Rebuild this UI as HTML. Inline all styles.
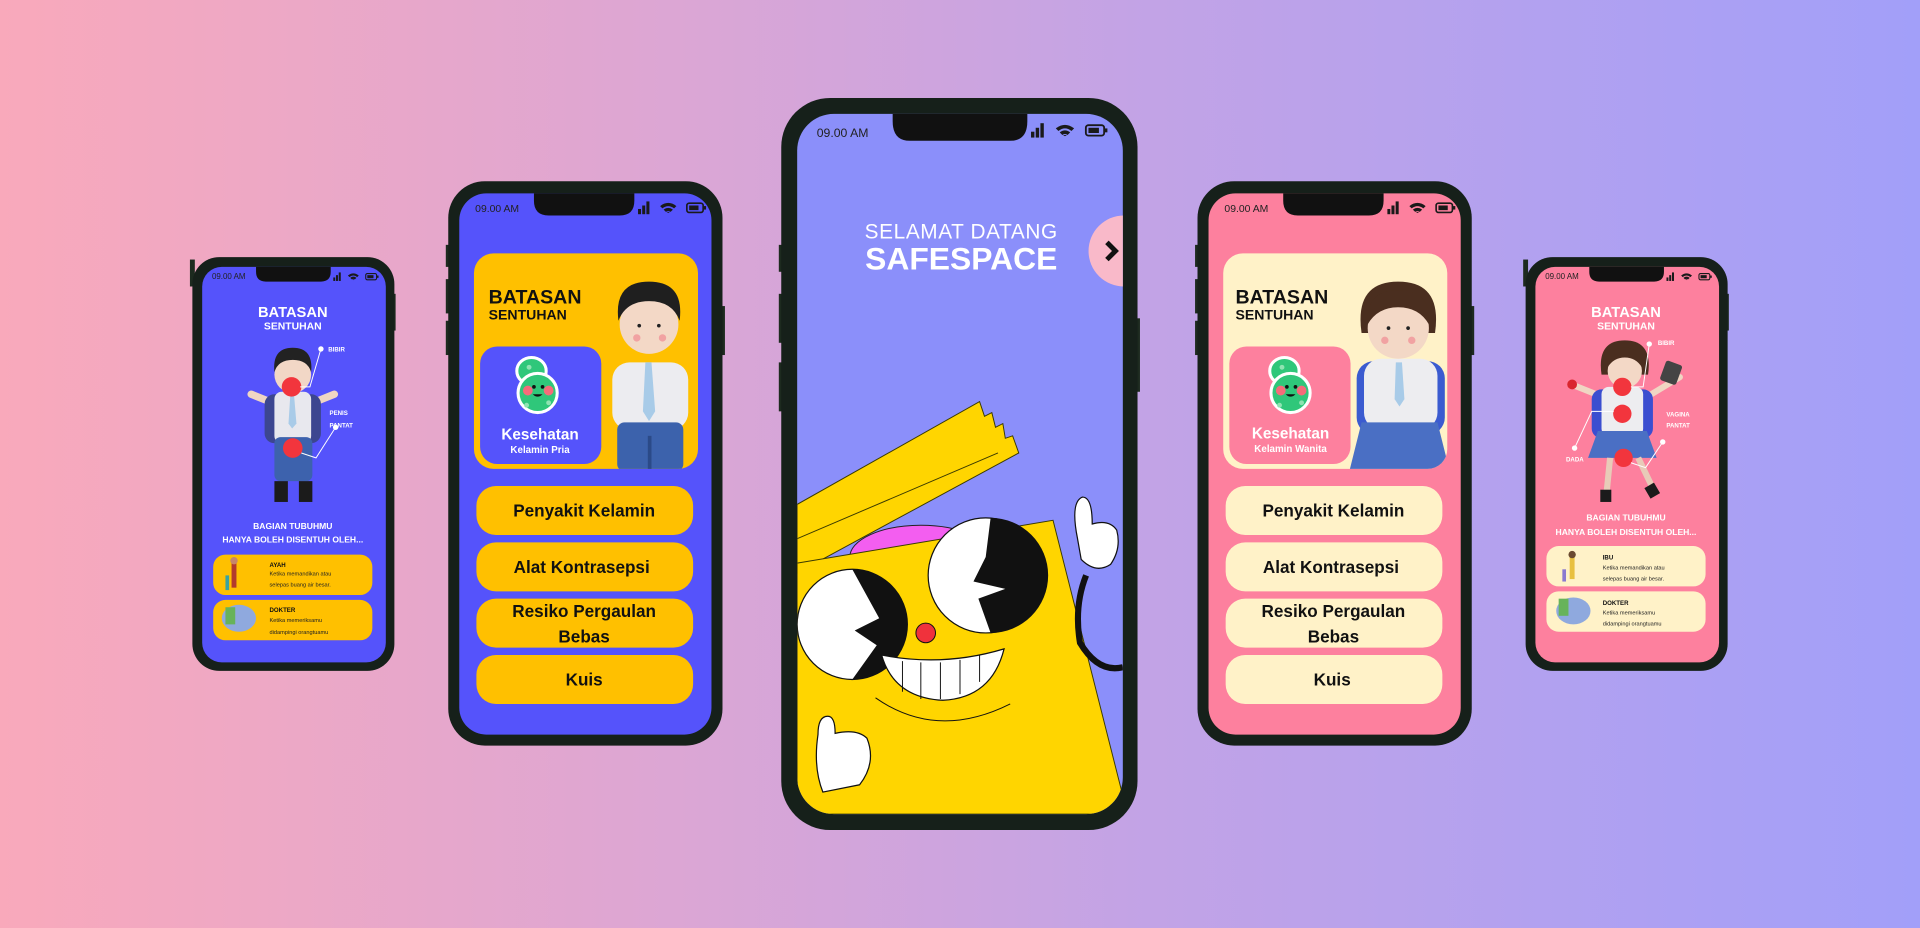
<!DOCTYPE html>
<html><head><meta charset="utf-8"><style>
html,body{margin:0;padding:0;width:1920px;height:928px;overflow:hidden}
body{background:linear-gradient(90deg,#f9a9bb 0%,#dca6d4 35%,#c2a3e6 60%,#a29ff9 100%)}
svg{position:absolute;left:0;top:0}
text{font-family:"Liberation Sans",sans-serif}
</style></head><body>
<svg width="1920" height="928" viewBox="0 0 1568 758" xmlns="http://www.w3.org/2000/svg">
<defs>
<symbol id="st" viewBox="0 0 60 12">
<rect x="0" y="7" width="2.6" height="4.5" fill="#1a1a1a"/><rect x="3.6" y="4" width="2.6" height="7.5" fill="#1a1a1a"/><rect x="7.2" y="0.5" width="2.6" height="11" fill="#1a1a1a"/>
<path d="M19 4.5 Q26 -1 33 4.5 L31 6.5 Q26 2.5 21 6.5Z M22 7.5 Q26 4.5 30 7.5 L28 9.5 Q26 8 24 9.5Z M26 10.5 l-1.5 -1 h3z" fill="#1a1a1a"/>
<rect x="42" y="2" width="14" height="8" rx="2" fill="none" stroke="#1a1a1a" stroke-width="1.4"/><rect x="44" y="4" width="8" height="4" fill="#1a1a1a"/><rect x="56.5" y="4.5" width="2" height="3" fill="#1a1a1a"/>
</symbol>
<symbol id="germ" viewBox="0 0 40 50">
<ellipse cx="16" cy="14" rx="12" ry="11" fill="#2fc77a" stroke="#fff" stroke-width="2.5"/>
<ellipse cx="21" cy="32" rx="16" ry="16" fill="#2fc77a" stroke="#fff" stroke-width="2.5"/>
<circle cx="13" cy="30" r="4" fill="#f56b7a"/><circle cx="30" cy="30" r="4" fill="#f56b7a"/>
<circle cx="18" cy="27" r="1.5" fill="#111"/><circle cx="25" cy="27" r="1.5" fill="#111"/>
<path d="M17 33 q4 4 8 0z" fill="#111"/>
<circle cx="12" cy="42" r="2" fill="#8fe3b2"/><circle cx="30" cy="40" r="2" fill="#8fe3b2"/><circle cx="14" cy="11" r="2" fill="#8fe3b2"/>
</symbol>
<clipPath id="cs"><rect x="651" y="93" width="266" height="572" rx="30"/></clipPath>
<clipPath id="c1"><rect x="387" y="207" width="183" height="176" rx="16"/></clipPath>
<clipPath id="c2"><rect x="999" y="207" width="183" height="176" rx="16"/></clipPath>
</defs>

<!-- ===== Small left phone ===== -->
<rect x="155" y="212" width="4" height="22" fill="#1d2a1f"/><rect x="320" y="240" width="3" height="30" fill="#1d2a1f"/>
<rect x="157" y="210" width="165" height="338" rx="22" fill="#16201a"/>
<rect x="165" y="218" width="150" height="323" rx="16" fill="#5553fb"/>
<path d="M209 218 h61 v4 q0 8 -8 8 h-45 q-8 0 -8 -8z" fill="#111"/>
<text x="173" y="228" font-size="6.5" fill="#222">09.00 AM</text>
<use href="#st" x="272" y="222" width="38" height="8"/>
<text x="239" y="259" font-size="12" font-weight="bold" fill="#fff" text-anchor="middle">BATASAN</text>
<text x="239" y="269" font-size="8.5" font-weight="bold" fill="#fff" text-anchor="middle">SENTUHAN</text>
<path d="M205 322 l20 8 M273 322 l-20 8" stroke="#f0d6c3" stroke-width="6" stroke-linecap="round"/>
<rect x="216" y="322" width="46" height="40" rx="8" fill="#3c4690"/>
<rect x="224" y="320" width="30" height="42" rx="6" fill="#e8e8ee"/>
<path d="M237 322 l3 0 l2 24 l-3.5 4 l-3 -4z" fill="#a9cbe8"/>
<rect x="224" y="357" width="31" height="36" rx="5" fill="#3d62ad"/>
<rect x="224" y="393" width="11" height="17" fill="#1b1b1b"/><rect x="244" y="393" width="11" height="17" fill="#1b1b1b"/>
<circle cx="239" cy="306" r="15" fill="#f2d7c6"/>
<path d="M224 304 q-2 -20 15 -20 q17 0 15 20 q-3 -10 -15 -10 q-12 0 -15 10z" fill="#222"/>
<circle cx="238" cy="316" r="8" fill="#f2353d"/>
<circle cx="239" cy="366" r="8" fill="#f2353d"/>
<path d="M245 316 h8 l9 -31" stroke="#fff" stroke-width="0.8" fill="none"/><circle cx="262" cy="285" r="2.2" fill="#fff"/>
<path d="M246 370 l12 4 l16 -25" stroke="#fff" stroke-width="0.8" fill="none"/><circle cx="274" cy="349" r="2.2" fill="#fff"/>
<text x="268" y="287" font-size="5" font-weight="bold" fill="#fff">BIBIR</text>
<text x="269" y="339" font-size="5" font-weight="bold" fill="#fff">PENIS</text>
<text x="269" y="344" font-size="5" font-weight="bold" fill="#fff" dy="5">PANTAT</text>
<text x="239" y="432" font-size="7" font-weight="bold" fill="#fff" text-anchor="middle">BAGIAN TUBUHMU</text>
<text x="239" y="443" font-size="7" font-weight="bold" fill="#fff" text-anchor="middle">HANYA BOLEH DISENTUH OLEH...</text>
<rect x="174" y="453" width="130" height="33" rx="10" fill="#ffc000"/>
<rect x="174" y="490" width="130" height="33" rx="10" fill="#ffc000"/>
<rect x="189" y="460" width="4" height="20" fill="#b23a2d"/><circle cx="191" cy="458" r="3" fill="#c7866a"/><rect x="184" y="470" width="3" height="12" fill="#3aa3a0"/>
<ellipse cx="195" cy="505" rx="14" ry="11" fill="#8fa9de"/><rect x="184" y="496" width="8" height="14" fill="#67b35a"/>
<text x="220" y="463" font-size="5" font-weight="bold" fill="#111">AYAH</text>
<text x="220" y="470" font-size="4.6" fill="#222">Ketika memandikan atau</text>
<text x="220" y="479" font-size="4.6" fill="#222">selepas buang air besar.</text>
<text x="220" y="500" font-size="5" font-weight="bold" fill="#111">DOKTER</text>
<text x="220" y="508" font-size="4.6" fill="#222">Ketika memeriksamu</text>
<text x="220" y="518" font-size="4.6" fill="#222">didampingi orangtuamu</text>

<!-- ===== Left-mid phone ===== -->
<rect x="364" y="200" width="4" height="18" fill="#1d2a1f"/><rect x="364" y="228" width="4" height="28" fill="#1d2a1f"/><rect x="364" y="262" width="4" height="28" fill="#1d2a1f"/><rect x="588" y="250" width="4" height="40" fill="#1d2a1f"/>
<rect x="366" y="148" width="224" height="461" rx="30" fill="#16201a"/>
<rect x="375" y="158" width="206" height="442" rx="22" fill="#5553fb"/>
<path d="M436 158 h82 v6 q0 12 -12 12 h-58 q-12 0 -12 -12z" fill="#111"/>
<text x="388" y="173" font-size="8.5" fill="#222">09.00 AM</text>
<use href="#st" x="521" y="164" width="57" height="11.5"/>
<rect x="387" y="207" width="183" height="176" rx="16" fill="#ffc000"/>
<g clip-path="url(#c1)">
<rect x="500" y="296" width="62" height="55" rx="14" fill="#ececf0"/>
<path d="M527 296 h5 l3 40 l-5 8 l-5 -8z" fill="#a8cbe8"/>
<rect x="504" y="345" width="54" height="40" rx="6" fill="#3c62ac"/>
<rect x="529" y="356" width="3" height="30" fill="#2b4a88"/>
<circle cx="530" cy="265" r="24" fill="#f3d8c6"/>
<path d="M505 262 q-4 -32 25 -32 q29 0 25 32 q-6 -16 -25 -16 q-19 0 -25 16z" fill="#1f1f1f"/>
<circle cx="520" cy="276" r="3" fill="#f1a2a2"/><circle cx="541" cy="276" r="3" fill="#f1a2a2"/>
<circle cx="522" cy="266" r="1.5" fill="#222"/><circle cx="538" cy="266" r="1.5" fill="#222"/>
</g>
<text x="399" y="248" font-size="16" font-weight="bold" fill="#111">BATASAN</text>
<text x="399" y="261" font-size="11.5" font-weight="bold" fill="#111">SENTUHAN</text>
<rect x="392" y="283" width="99" height="96" rx="14" fill="#5553fb"/>
<use href="#germ" x="418" y="289" width="40" height="50"/>
<text x="441" y="359" font-size="12.5" font-weight="bold" fill="#fff" text-anchor="middle">Kesehatan</text>
<text x="441" y="370" font-size="8" font-weight="bold" fill="#fff" text-anchor="middle">Kelamin Pria</text>
<g fill="#ffc000"><rect x="389" y="397" width="177" height="40" rx="16"/><rect x="389" y="443" width="177" height="40" rx="16"/><rect x="389" y="489" width="177" height="40" rx="16"/><rect x="389" y="535" width="177" height="40" rx="16"/></g>
<g font-size="14" font-weight="bold" fill="#111" text-anchor="middle">
<text x="477" y="422">Penyakit Kelamin</text><text x="475" y="468">Alat Kontrasepsi</text><text x="477" y="504">Resiko Pergaulan</text><text x="477" y="525">Bebas</text><text x="477" y="560">Kuis</text></g>

<!-- ===== Center phone ===== -->
<rect x="636" y="200" width="4" height="22" fill="#1d2a1f"/><rect x="636" y="240" width="4" height="40" fill="#1d2a1f"/><rect x="636" y="296" width="4" height="40" fill="#1d2a1f"/><rect x="927" y="260" width="4" height="60" fill="#1d2a1f"/>
<rect x="638" y="80" width="291" height="598" rx="40" fill="#16201a"/>
<rect x="651" y="93" width="266" height="572" rx="30" fill="#8b8ffa"/>
<g clip-path="url(#cs)">
<circle cx="918" cy="205" r="29" fill="#f9b9c9"/>
<path d="M904 198 l7 7 l-7 7" stroke="#111" stroke-width="4" fill="none"/>
<ellipse cx="752" cy="455" rx="58" ry="26" fill="#f35ef0" stroke="#222" stroke-width="0.8"/>
<path d="M651 412 L800 328 l4 12 l6 -3 l3 12 l6 -3 l2 12 l6 -2 l5 14 L651 468z" fill="#ffd500" stroke="#3a3a00" stroke-width="0.8"/>
<path d="M651 440 L815 370" stroke="#3a3a00" stroke-width="0.8"/>
<path d="M651 460 L860 425 L917 650 L917 665 L651 665z" fill="#ffd500" stroke="#3a3a00" stroke-width="0.8"/>
<path d="M917 545 q-20 5 -35 -20 q-5 -30 5 -55" stroke="#111" stroke-width="5" fill="none"/>
<path d="M880 440 q-6 -30 4 -34 q8 0 8 22 q14 -4 20 5 q4 15 -5 28 q-12 8 -24 -4z" fill="#fff" stroke="#111" stroke-width="1"/>
<circle cx="696" cy="510" r="45" fill="#fff" stroke="#111" stroke-width="1"/>
<path d="M696 465 a45 45 0 0 1 0 90 l20 -28 l-18 -12 l20 -10 z" fill="#111"/>
<circle cx="805" cy="470" r="47" fill="#fff" stroke="#111" stroke-width="1"/>
<path d="M805 423 a47 47 0 0 1 0 94 l-10 -28 l22 -8 l-26 -6 l10 -20 z" fill="#111" transform="translate(4 0)"/>
<circle cx="756" cy="517" r="8" fill="#f0323c" stroke="#111" stroke-width="0.8"/>
<path d="M720 535 q50 10 100 -5 q-10 40 -50 42 q-40 -2 -50 -37z" fill="#fff" stroke="#111" stroke-width="1"/>
<path d="M737 540 v25 M752 541 v30 M768 541 v30 M784 539 v28 M800 535 v22" stroke="#111" stroke-width="0.8"/>
<path d="M715 570 q50 35 110 5" stroke="#111" stroke-width="0.8" fill="none"/>
<path d="M668 600 q0 -15 8 -15 q6 0 6 14 q18 -4 26 4 q8 20 -6 38 l-30 6 q-8 -20 -4 -47z" fill="#fff" stroke="#111" stroke-width="1"/>
</g>
<path d="M729 93 h110 v6 q0 16 -14 16 h-82 q-14 0 -14 -16z" fill="#111"/>
<text x="667" y="112" font-size="10" fill="#222">09.00 AM</text>
<use href="#st" x="842" y="100" width="64" height="13"/>
<text x="785" y="195" font-size="17" fill="#fff" text-anchor="middle" letter-spacing="0.5">SELAMAT DATANG</text>
<text x="785" y="220" font-size="26" font-weight="bold" fill="#fff" text-anchor="middle">SAFESPACE</text>

<!-- ===== Right-mid phone ===== -->
<rect x="976" y="200" width="4" height="18" fill="#1d2a1f"/><rect x="976" y="228" width="4" height="28" fill="#1d2a1f"/><rect x="976" y="262" width="4" height="28" fill="#1d2a1f"/><rect x="1200" y="250" width="4" height="40" fill="#1d2a1f"/>
<rect x="978" y="148" width="224" height="461" rx="30" fill="#16201a"/>
<rect x="987" y="158" width="206" height="442" rx="22" fill="#fd809e"/>
<path d="M1048 158 h82 v6 q0 12 -12 12 h-58 q-12 0 -12 -12z" fill="#111"/>
<text x="1000" y="173" font-size="8.5" fill="#222">09.00 AM</text>
<use href="#st" x="1133" y="164" width="57" height="11.5"/>
<rect x="999" y="207" width="183" height="176" rx="16" fill="#fff2c8"/>
<g clip-path="url(#c2)">
<rect x="1108" y="295" width="72" height="60" rx="14" fill="#3b5bd0"/>
<rect x="1114" y="293" width="60" height="58" rx="14" fill="#ededf0"/>
<path d="M1140 296 h5 l2 30 l-4 6 l-4 -6z" fill="#a8cbe8"/>
<path d="M1112 345 h62 l10 40 h-82z" fill="#4a6fc4"/>
<path d="M1112 272 q-6 -42 30 -42 q36 0 30 42 z" fill="#4a2e1f"/>
<circle cx="1142" cy="268" r="25" fill="#f3d8c6"/>
<path d="M1117 265 q-2 -28 25 -28 q27 0 25 28 q-8 -14 -25 -14 q-17 0 -25 14z" fill="#4a2e1f"/>
<circle cx="1131" cy="278" r="3" fill="#f1a2a2"/><circle cx="1153" cy="278" r="3" fill="#f1a2a2"/>
<circle cx="1134" cy="268" r="1.5" fill="#222"/><circle cx="1150" cy="268" r="1.5" fill="#222"/>
</g>
<text x="1009" y="248" font-size="16" font-weight="bold" fill="#111">BATASAN</text>
<text x="1009" y="261" font-size="11.5" font-weight="bold" fill="#111">SENTUHAN</text>
<rect x="1004" y="283" width="99" height="96" rx="14" fill="#fd809e"/>
<use href="#germ" x="1033" y="289" width="40" height="50"/>
<text x="1054" y="358" font-size="12.5" font-weight="bold" fill="#fff" text-anchor="middle">Kesehatan</text>
<text x="1054" y="369" font-size="8" font-weight="bold" fill="#fff" text-anchor="middle">Kelamin Wanita</text>
<g fill="#fff2c8"><rect x="1001" y="397" width="177" height="40" rx="16"/><rect x="1001" y="443" width="177" height="40" rx="16"/><rect x="1001" y="489" width="177" height="40" rx="16"/><rect x="1001" y="535" width="177" height="40" rx="16"/></g>
<g font-size="14" font-weight="bold" fill="#111" text-anchor="middle">
<text x="1089" y="422">Penyakit Kelamin</text><text x="1087" y="468">Alat Kontrasepsi</text><text x="1089" y="504">Resiko Pergaulan</text><text x="1089" y="525">Bebas</text><text x="1088" y="560">Kuis</text></g>

<!-- ===== Small right phone ===== -->
<rect x="1244" y="212" width="4" height="22" fill="#1d2a1f"/><rect x="1409" y="240" width="3" height="30" fill="#1d2a1f"/>
<rect x="1246" y="210" width="165" height="338" rx="22" fill="#16201a"/>
<rect x="1254" y="218" width="150" height="323" rx="16" fill="#fd809e"/>
<path d="M1298 218 h61 v4 q0 8 -8 8 h-45 q-8 0 -8 -8z" fill="#111"/>
<text x="1262" y="228" font-size="6.5" fill="#222">09.00 AM</text>
<use href="#st" x="1361" y="222" width="38" height="8"/>
<text x="1328" y="259" font-size="12" font-weight="bold" fill="#fff" text-anchor="middle">BATASAN</text>
<text x="1328" y="269" font-size="8.5" font-weight="bold" fill="#fff" text-anchor="middle">SENTUHAN</text>
<path d="M1286 315 l25 10 M1372 308 l-25 15" stroke="#f0d6c3" stroke-width="5" stroke-linecap="round"/>
<circle cx="1284" cy="314" r="4" fill="#d9262e"/>
<rect x="1358" y="296" width="14" height="17" rx="2" fill="#444" transform="rotate(20 1365 304)"/>
<rect x="1300" y="318" width="50" height="40" rx="8" fill="#3b4ed0"/>
<rect x="1308" y="316" width="34" height="40" rx="6" fill="#ededf0"/>
<path d="M1305 352 h40 l8 22 h-56z" fill="#4a6fc4"/>
<path d="M1315 374 l-3 30 M1338 374 l12 25" stroke="#e8cbb8" stroke-width="5"/>
<rect x="1307" y="400" width="9" height="10" fill="#1b1b1b"/><rect x="1345" y="396" width="9" height="10" fill="#1b1b1b" transform="rotate(-30 1349 401)"/>
<path d="M1308 306 q-4 -28 19 -28 q23 0 19 28z" fill="#4a2e1f"/>
<circle cx="1327" cy="303" r="14" fill="#f3d8c6"/>
<path d="M1313 300 q-1 -16 14 -16 q15 0 14 16 q-5 -8 -14 -8 q-9 0 -14 8z" fill="#4a2e1f"/>
<circle cx="1325" cy="316" r="7.5" fill="#f2353d"/>
<circle cx="1325" cy="338" r="7.5" fill="#f2353d"/>
<circle cx="1326" cy="374" r="7.5" fill="#f2353d"/>
<path d="M1332 316 h10 l5 -35" stroke="#fff" stroke-width="0.8" fill="none"/><circle cx="1347" cy="281" r="2.2" fill="#fff"/>
<path d="M1318 336 h-18 l-14 30" stroke="#fff" stroke-width="0.8" fill="none"/><circle cx="1286" cy="366" r="2.2" fill="#fff"/>
<path d="M1332 378 l12 4 l14 -21" stroke="#fff" stroke-width="0.8" fill="none"/><circle cx="1358" cy="361" r="2.2" fill="#fff"/>
<text x="1354" y="282" font-size="5" font-weight="bold" fill="#fff">BIBIR</text>
<text x="1361" y="340" font-size="5" font-weight="bold" fill="#fff">VAGINA</text>
<text x="1361" y="349" font-size="5" font-weight="bold" fill="#fff">PANTAT</text>
<text x="1279" y="377" font-size="5" font-weight="bold" fill="#fff">DADA</text>
<text x="1328" y="425" font-size="7" font-weight="bold" fill="#fff" text-anchor="middle">BAGIAN TUBUHMU</text>
<text x="1328" y="437" font-size="7" font-weight="bold" fill="#fff" text-anchor="middle">HANYA BOLEH DISENTUH OLEH...</text>
<rect x="1263" y="446" width="130" height="33" rx="10" fill="#fff2c8"/>
<rect x="1263" y="483" width="130" height="33" rx="10" fill="#fff2c8"/>
<rect x="1282" y="455" width="4" height="18" fill="#e8c040"/><circle cx="1284" cy="453" r="3" fill="#6b4a30"/><rect x="1276" y="465" width="3" height="10" fill="#8a7ad0"/>
<ellipse cx="1285" cy="499" rx="14" ry="11" fill="#8fa9de"/><rect x="1273" y="489" width="8" height="14" fill="#67b35a"/>
<text x="1309" y="457" font-size="5" font-weight="bold" fill="#111">IBU</text>
<text x="1309" y="465" font-size="4.6" fill="#222">Ketika memandikan atau</text>
<text x="1309" y="474" font-size="4.6" fill="#222">selepas buang air besar.</text>
<text x="1309" y="494" font-size="5" font-weight="bold" fill="#111">DOKTER</text>
<text x="1309" y="502" font-size="4.6" fill="#222">Ketika memeriksamu</text>
<text x="1309" y="511" font-size="4.6" fill="#222">didampingi orangtuamu</text>
</svg>
</body></html>
